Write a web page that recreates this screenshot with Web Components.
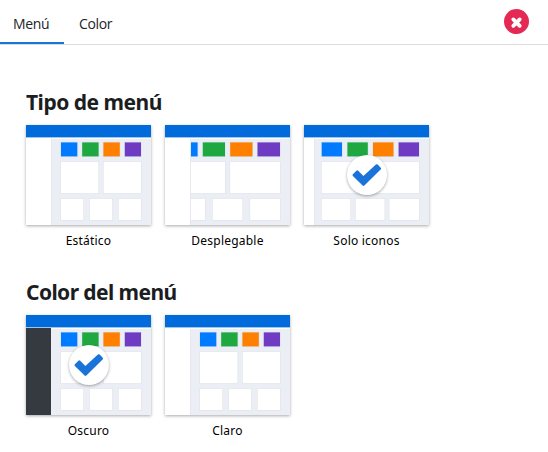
<!DOCTYPE html>
<html lang="es">
<head>
<meta charset="utf-8">
<title>Menú</title>
<style>
body{margin:0;background:#fff;color:#212529;font-family:"Noto Sans","Open Sans",sans-serif}
</style>
</head>
<body>
<settings-panel>
  <tab-item slot="tabs" active>Menú</tab-item>
  <tab-item slot="tabs">Color</tab-item>
  <option-group>
    <span slot="title" style="letter-spacing:var(--title-a)">Tipo de menú</span>
    <layout-option kind="static">Estático</layout-option>
    <layout-option kind="overlay">Desplegable</layout-option>
    <layout-option kind="icons" checked>Solo iconos</layout-option>
  </option-group>
  <option-group>
    <span slot="title" style="letter-spacing:var(--title-b)">Color del menú</span>
    <layout-option kind="static" dark checked>Oscuro</layout-option>
    <layout-option kind="static">Claro</layout-option>
  </option-group>
</settings-panel>
<script>
const attach = (el, html) => { el.attachShadow({mode: 'open'}).innerHTML = html; };

customElements.define('settings-panel', class extends HTMLElement {
  constructor() {
    super();
    attach(this, `<style>
      :host{display:block;height:452px;overflow:hidden;--title-a:-.5px;--title-b:-.58px}
      header{display:flex;justify-content:space-between;height:44px;border-bottom:1px solid #dcdcdc}
      nav{display:flex}
      button{all:unset;width:25px;height:25px;margin:9px 19px 0 0}
      svg{display:block}
      main{display:flex;flex-direction:column;gap:32px;padding:44px 26px 0}
    </style>
    <header><nav><slot name="tabs"></slot></nav>
      <button aria-label="Cerrar"><svg width="25" height="25" viewBox="0 0 25 25"><circle cx="12.5" cy="12.5" r="12.5" fill="#e42a54"/><path d="M9.3 10.4l6.4 6.4M15.7 10.4l-6.4 6.4" stroke="#fff" stroke-width="3.8" stroke-linecap="round"/></svg></button>
    </header>
    <main><slot></slot></main>`);
  }
});

customElements.define('tab-item', class extends HTMLElement {
  constructor() {
    super();
    attach(this, `<style>
      :host{display:block;box-sizing:border-box;height:44px;padding:0 14px 0 13px;font:14px/48px "Open Sans",sans-serif;letter-spacing:-.35px;color:#212529;border-bottom:2px solid transparent}
      :host([active]){width:64px;border-color:#1a73d9}
      :host(:not([active])){padding-left:15px}
    </style><slot></slot>`);
  }
});

customElements.define('option-group', class extends HTMLElement {
  constructor() {
    super();
    attach(this, `<style>
      :host{display:block;height:158px}
      h2{margin:0;height:36px;font:bold 21px/27px "Noto Sans",sans-serif;color:#1b1d1f;white-space:nowrap}
      div{display:flex;gap:14px}
    </style><h2><slot name="title"></slot></h2><div><slot></slot></div>`);
  }
});

const LAYOUTS = {
  static: {side: 25, tiles: [[35,51.3],[56.2,72.6],[77.4,93.8],[98.8,115]], wide: [[35,72.4],[77.7,115]], small: [[35,57.3],[63.8,86.2],[92.7,115]]},
  overlay: {side: 25, tiles: [[10.3,32.6],[37.8,60],[65.2,87.5],[92.5,115]], wide: [[10.3,60],[65.2,115]], small: [[10.3,40],[47.7,77.3],[85.2,115]]},
  icons: {side: 10, tiles: [[17.7,38],[43.4,63.8],[69,89.5],[94.6,115]], wide: [[17.7,63.7],[69,115]], small: [[17.7,46.3],[51.7,80.5],[85.5,115]]}
};
const COLORS = ['#007bff', '#1fa83f', '#ff8000', '#6f3bc2'];

customElements.define('layout-option', class extends HTMLElement {
  connectedCallback() {
    if (this.shadowRoot) return;
    const l = LAYOUTS[this.getAttribute('kind')];
    const cell = (y, h, edge) => ([a, b], i) =>
      `<rect x="${a}" y="${y}" width="${(b - a).toFixed(1)}" height="${h}" fill="${h === 14 ? COLORS[i] : '#fff'}" stroke="${edge}" stroke-width="1.4" paint-order="stroke"/>`;
    const dark = this.hasAttribute('dark');
    attach(this, `<style>
      :host{display:block;width:125px}
      figure{position:relative;margin:0}
      .thumb{display:block;box-shadow:0 1px 3px rgba(0,0,0,.34)}
      .mark{position:absolute;left:43px;top:30px;width:40px;height:40px;border-radius:50%;background:#fff;box-shadow:0 1px 3px rgba(0,0,0,.35)}
      figcaption{text-align:center;font:12px/18px "Noto Sans",sans-serif;letter-spacing:.22px;color:#000;padding-top:7px;white-space:nowrap}
    </style>
    <figure>
      <svg class="thumb" width="125" height="100" viewBox="0 0 125 100">
        <rect width="125" height="100" fill="#ebeff5"/>
        ${l.tiles.map(cell(17.4, 14, '#dbe5f0')).join('')}
        ${l.wide.map(cell(36.8, 31.4, '#e2e6eb')).join('')}
        ${l.small.map(cell(73.8, 21.2, '#e2e6eb')).join('')}
        <rect y="13" width="125" height="1" fill="#fbfcfe"/>
        <rect y="12" width="${l.side}" height="88" fill="${dark ? '#343a40' : '#fff'}"/>
        ${dark ? '' : `<rect x="${l.side}" y="14" width="1" height="86" fill="#e5e9ee"/>`}
        <rect width="125" height="12" fill="#016bdc"/>
        <rect y="12" width="125" height="1" fill="#9cc5f0"/>
      </svg>
      ${this.hasAttribute('checked') ? `<svg class="mark" viewBox="0 0 40 40"><path d="M5.9 19.2L9.4 15.7Q10.3 15 11.2 15.8L16.4 21 28.9 9.5Q29.8 8.8 30.7 9.6L33.7 12.8Q34.5 13.7 33.6 14.6L17.4 30.5Q16.5 31.3 15.6 30.5L5.9 20.9Q5.1 20 5.9 19.2Z" fill="#1a73d9"/></svg>` : ''}
      <figcaption><slot></slot></figcaption>
    </figure>`);
  }
});
</script>
</body>
</html>
